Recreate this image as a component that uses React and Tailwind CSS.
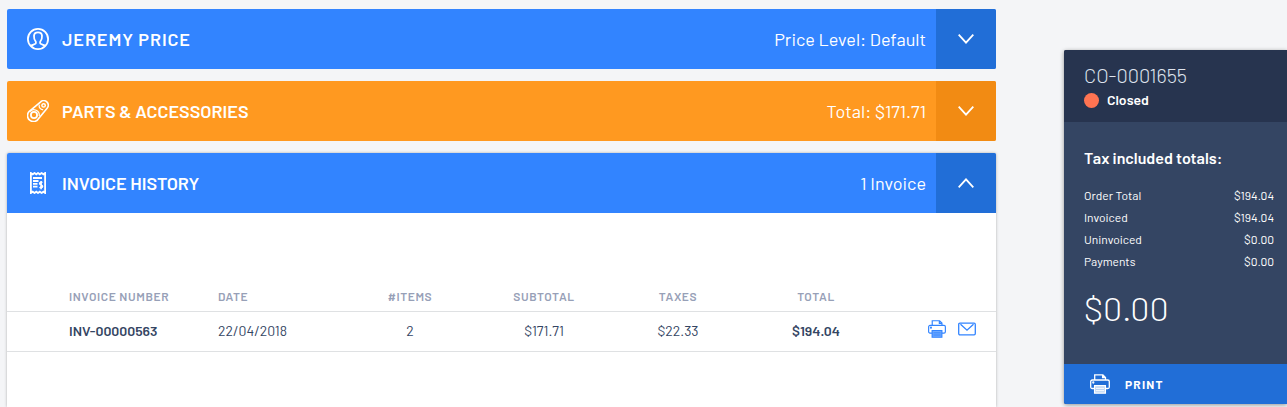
import React, { useState } from 'react'
import clsx from 'clsx'

const invoices = [
    { number: 'INV-00000563', date: '22/04/2018', items: 2, subtotal: '$171.71', taxes: '$22.33', total: '$194.04' },
];

const totals = [
    { label: 'Order Total', value: '$194.04' },
    { label: 'Invoiced', value: '$194.04' },
    { label: 'Uninvoiced', value: '$0.00' },
    { label: 'Payments', value: '$0.00' },
];

const UserIcon = () => (
    <svg viewBox="0 0 22 22" fill="none" stroke="currentColor" strokeWidth="1.8" strokeLinejoin="round" className="size-[22px]">
        <circle cx="11" cy="11" r="10.1" />
        <path d="M3.600 18c1-1.100 3.600-1.500 4.800-2.200.7-.5.6-1.900.1-2.600C7.300 11.800 6.900 10 7 7.900 7.100 5.500 8.700 4.300 11 4.300s3.900 1.200 4 3.600c.1 2.100-.3 3.900-1.500 5.300-.5.7-.6 2.100.1 2.600 1.200.7 3.800 1.100 4.800 2.200" />
    </svg>
)

const BeltIcon = () => (
    <svg viewBox="0 0 22 22" fill="none" stroke="currentColor" strokeWidth="1.600" className="size-[22px]">
        <path d="M2.300 11.300 13.400 2.100A4.500 4.500 0 0 1 20.100 8.300L11.900 18.200A6 6 0 1 1 2.300 11.300Z" />
        <circle cx="7" cy="15" r="3.100" strokeWidth="1.800" />
        <path d="M2.800 11.600A5.400 5.400 0 0 1 12.200 16" strokeWidth="1.200" />
        <circle cx="16.600" cy="5.400" r="1.700" strokeWidth="1.500" />
        <path d="M12.300 4.600c-.7 2.600.9 4.800 3.900 5.200" strokeWidth="1.200" />
    </svg>
)

const ReceiptIcon = () => (
    <svg viewBox="0 0 22 22" fill="none" stroke="currentColor" strokeWidth="1.800" className="size-[22px]">
        <path d="M3.900 1v20l1.800-1.300L7.500 21l1.800-1.300L11 21l1.800-1.300 1.800 1.300 1.800-1.300 1.700 1.300V1l-1.700 1.300L14.600 1l-1.800 1.300L11 1 9.300 2.300 7.500 1 5.700 2.300Z" />
        <path d="M6 6h9M6 9h5.500M6 11.800h4.500M6 14.600h4.500" />
        <path d="M15.400 10.700c-.6-.6-2.700-.6-2.700.9 0 1.700 2.800 1 2.800 2.700 0 1.500-2.200 1.500-2.900.8M14.100 9v8.200" strokeWidth="1.700" />
    </svg>
)

const PrinterIcon = ({ className }) => (
    <svg viewBox="0 0 20 20" fill="none" stroke="currentColor" strokeWidth="1.300" className={className}>
        <path d="M4.700 6V.8h8.200l2.600 2.600V6M12.600 1v2.700h2.800" />
        <path d="M4.500 14.500H2.200A1.500 1.500 0 0 1 .7 13V7.500A1.500 1.500 0 0 1 2.200 6h15.600a1.500 1.500 0 0 1 1.500 1.500V13a1.500 1.500 0 0 1-1.500 1.500h-2.300" />
        <path d="M4.600 11.700h10.800v7.500H4.600Z" fill="currentColor" fillOpacity=".7" />
        <path d="M6 14.300h8M6 16.700h8" strokeWidth="1" />
        <circle cx="3.300" cy="8.500" r=".5" />
    </svg>
)

const MailIcon = () => (
    <svg viewBox="0 0 18 14" fill="none" stroke="currentColor" strokeWidth="1.300" className="h-[14px] w-[18px]">
        <rect x=".7" y="1.200" width="16.600" height="11.600" rx="1.200" />
        <path d="m2.500 2.200 6.500 6 6.500-6" />
    </svg>
)

const Chevron = ({ open }) => (
    <svg viewBox="0 0 16 10" fill="none" stroke="currentColor" strokeWidth="1.800" className={clsx('h-[10px] w-4', open && 'rotate-180')}>
        <path d="m.7.7 7.300 8 7.300-8" />
    </svg>
)

const Section = ({ icon, title, info, orange, spaced, grow, open, onToggle, children }) => (
    <section className={clsx('flex flex-col rounded-t-xs bg-white', open && 'shadow-[0_0_3px_rgba(0,0,0,0.3)]', open && grow ? 'flex-1' : 'rounded-b-xs')}>
        <header className={clsx('flex h-[60px] items-center overflow-hidden rounded-t-xs text-white', orange ? 'bg-[#ff9920]' : 'bg-[#3284ff]', !open && 'rounded-b-xs')}>
            <span className="ml-5">{icon}</span>
            <h2 className={clsx('ml-[13px] text-lg font-semibold', spaced && 'tracking-wider')}>{title}</h2>
            <span className="mr-[10px] ml-auto text-lg">{info}</span>
            <button type="button" onClick={onToggle} aria-expanded={open} aria-label={title}
                className={clsx('flex h-full w-[60px] items-center justify-center', orange ? 'bg-[#f28b13]' : 'bg-[#216ed7]')}>
                <Chevron open={open} />
            </button>
        </header>
        {open && children}
    </section>
)

const InvoiceTable = () => (
    <table className="mt-[68px] w-full table-fixed border-collapse text-sm text-[#344563]">
        <colgroup>
            <col className="w-[211px]" />
            <col />
            <col className="w-[134px]" />
            <col className="w-[134px]" />
            <col className="w-[134px]" />
            <col className="w-[142px]" />
            <col className="w-[109px]" />
        </colgroup>
        <thead>
            <tr className="h-[30px] border-b border-[#dfe1e3] text-xs whitespace-nowrap text-[#97a0b7]">
                <th className="pl-[62px] text-left font-semibold tracking-wider">INVOICE NUMBER</th>
                <th className="text-left font-semibold tracking-wider">DATE</th>
                <th className="font-semibold tracking-wider">#ITEMS</th>
                <th className="font-semibold tracking-wider">SUBTOTAL</th>
                <th className="font-semibold tracking-wider">TAXES</th>
                <th className="font-semibold tracking-wider">TOTAL</th>
                <td></td>
            </tr>
        </thead>
        <tbody>
            {
                invoices.map(inv => (
                    <tr key={inv.number} className="h-[40px] border-b border-[#dfe1e3] text-center">
                        <td className="pl-[62px] text-left font-semibold">{inv.number}</td>
                        <td className="text-left">{inv.date}</td>
                        <td>{inv.items}</td>
                        <td>{inv.subtotal}</td>
                        <td>{inv.taxes}</td>
                        <td className="font-semibold">{inv.total}</td>
                        <td className="pr-5 pb-1 text-[#3284ff]">
                            <div className="flex items-center justify-end gap-3">
                                <button type="button" aria-label="Print invoice"><PrinterIcon className="size-[18px]" /></button>
                                <button type="button" aria-label="Email invoice"><MailIcon /></button>
                            </div>
                        </td>
                    </tr>
                ))
            }
        </tbody>
    </table>
)

const Summary = () => (
    <aside className="mt-[41px] w-[223px] shrink-0 self-start overflow-hidden rounded-l-xs bg-[#344563] text-white shadow-[0_1px_4px_rgba(0,0,0,0.4)]">
        <div className="h-[72px] bg-[#27344f] px-5 pt-[13px]">
            <h1 className="text-xl leading-6 font-light text-[#dfe4ee]">CO-0001655</h1>
            <p className="mt-[3px] flex items-center gap-2 text-sm font-semibold">
                <span className="size-[15px] rounded-full bg-[#ff7452]"></span>
                Closed
            </p>
        </div>
        <div className="pt-[26px] pr-[13px] pb-[36px] pl-5">
            <h3 className="text-base leading-5 font-semibold">Tax included totals:</h3>
            <dl className="mt-4 text-xs leading-[22px]">
                {
                    totals.map(row => (
                        <div key={row.label} className="flex justify-between">
                            <dt>{row.label}</dt>
                            <dd>{row.value}</dd>
                        </div>
                    ))
                }
            </dl>
            <p className="mt-4 text-[34px] leading-10 font-light">$0.00</p>
        </div>
        <button type="button" className="flex h-10 w-full items-center gap-[15px] bg-[#216ed7] pl-[26px] text-xs font-bold tracking-widest">
            <PrinterIcon className="size-5" />
            PRINT
        </button>
    </aside>
)

const App = () => {

    const [open, setOpen] = useState('invoices');
    const toggle = (name) => setOpen(open === name ? '' : name);

    return (
        <div className="flex min-h-screen gap-[68px] overflow-hidden bg-[#f4f5f7] pt-[9px] pl-[7px] font-['Barlow','Roboto',sans-serif]">
            <main className="flex min-w-0 flex-1 flex-col gap-3">
                <Section icon={<UserIcon />} title="JEREMY PRICE" info="Price Level: Default" spaced
                    open={open === 'customer'} onToggle={() => toggle('customer')} />
                <Section icon={<BeltIcon />} title={'PARTS & ACCESSORIES'} info="Total: $171.71" orange
                    open={open === 'parts'} onToggle={() => toggle('parts')} />
                <Section icon={<ReceiptIcon />} title="INVOICE HISTORY" info="1 Invoice" grow
                    open={open === 'invoices'} onToggle={() => toggle('invoices')}>
                    <InvoiceTable />
                </Section>
            </main>
            <Summary />
        </div>
    )
}

export default App
